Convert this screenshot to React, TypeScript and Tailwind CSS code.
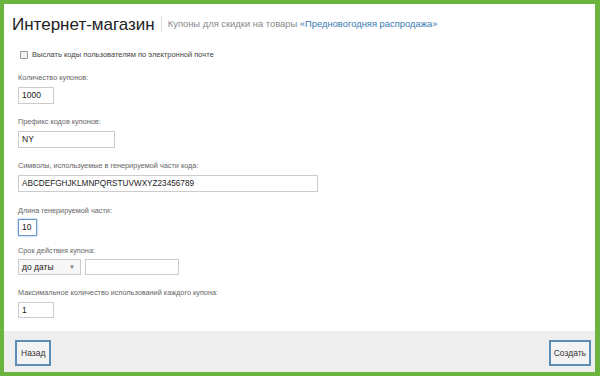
import React from 'react'

const Label = ({children}:{children:React.ReactNode}) => (
    <div className="text-[7.3px] leading-[10px] text-[#666]">{children}</div>
)

export default function App() {
    return (
        <div className="w-[600px] h-[376px] bg-[#6db33f] pt-[4px] pl-[4px] pr-[5px] pb-[4px] font-['Liberation_Sans',Arial,sans-serif]">
            <div className="w-full h-full bg-white flex flex-col">
                {/* header */}
                <div className="flex items-center h-[38px] pl-[8px] pt-[2px]">
                    <span className="text-[17px] text-[#222] leading-none">Интернет-магазин</span>
                    <span className="w-px h-[16px] bg-[#ddd] mx-[6px]"></span>
                    <span className="text-[9.4px] text-[#888] mt-[1px]">Купоны для скидки на товары <span className="text-[#3a78b0]">«Предновогодняя распродажа»</span></span>
                </div>

                <div className="flex-1 pl-[14px] flex flex-col">
                    <label className="flex items-center gap-[4px] mt-[7px]">
                        <span className="w-[8px] h-[8px] border border-[#999] bg-[#f4f4f4] rounded-[1px] ml-[2px]"></span>
                        <span className="text-[7.5px] text-[#444]">Выслать коды пользователям по электронной почте</span>
                    </label>

                    <div className="mt-[13px]"><Label>Количество купонов:</Label></div>
                    <div className="mt-[4px] w-[36px] h-[17px] border border-[#ccc] text-[8.5px] text-[#222] pl-[3px] flex items-center">1000</div>

                    <div className="mt-[13px]"><Label>Префикс кодов купонов:</Label></div>
                    <div className="mt-[4px] w-[97px] h-[17px] border border-[#ccc] text-[8.5px] text-[#222] pl-[3px] flex items-center">NY</div>

                    <div className="mt-[13px]"><Label>Символы, используемые в генерируемой части кода:</Label></div>
                    <div className="mt-[4px] w-[300px] h-[17px] border border-[#ccc] text-[8.2px] text-[#222] pl-[3px] flex items-center">ABCDEFGHJKLMNPQRSTUVWXYZ23456789</div>

                    <div className="mt-[14px]"><Label>Длина генерируемой части:</Label></div>
                    <div className="mt-[3px] w-[19px] h-[17px] border border-[#6699cc] shadow-[0_0_2px_#88aadd] text-[8.5px] text-[#222] pl-[3px] flex items-center">10</div>

                    <div className="mt-[10px]"><Label>Срок действия купона:</Label></div>
                    <div className="mt-[3px] flex gap-[4px]">
                        <div className="w-[63px] h-[16px] border border-[#ccc] bg-[#f7f7f7] text-[8.5px] text-[#222] pl-[3px] pr-[5px] flex items-center justify-between">
                            <span>до даты</span>
                            <span className="text-[6px] text-[#777]">▼</span>
                        </div>
                        <div className="w-[94px] h-[16px] border border-[#ccc]"></div>
                    </div>

                    <div className="mt-[13px]"><Label>Максимальное количество использований каждого купона:</Label></div>
                    <div className="mt-[4px] w-[36px] h-[16px] border border-[#ccc] text-[8.5px] text-[#222] pl-[3px] flex items-center">1</div>
                </div>

                {/* footer */}
                <div className="h-[41px] bg-[#eeeeee] flex items-center justify-between pl-[11px] pr-[4px] pt-[3px]">
                    <button className="h-[26px] px-[4px] border-2 border-[#5b8db8] bg-[#f3f3f3] text-[8.5px] text-[#333]">Назад</button>
                    <button className="h-[26px] px-[3px] border-2 border-[#5b8db8] bg-[#f3f3f3] text-[8.5px] text-[#333]">Создать</button>
                </div>
            </div>
        </div>
    )
}
